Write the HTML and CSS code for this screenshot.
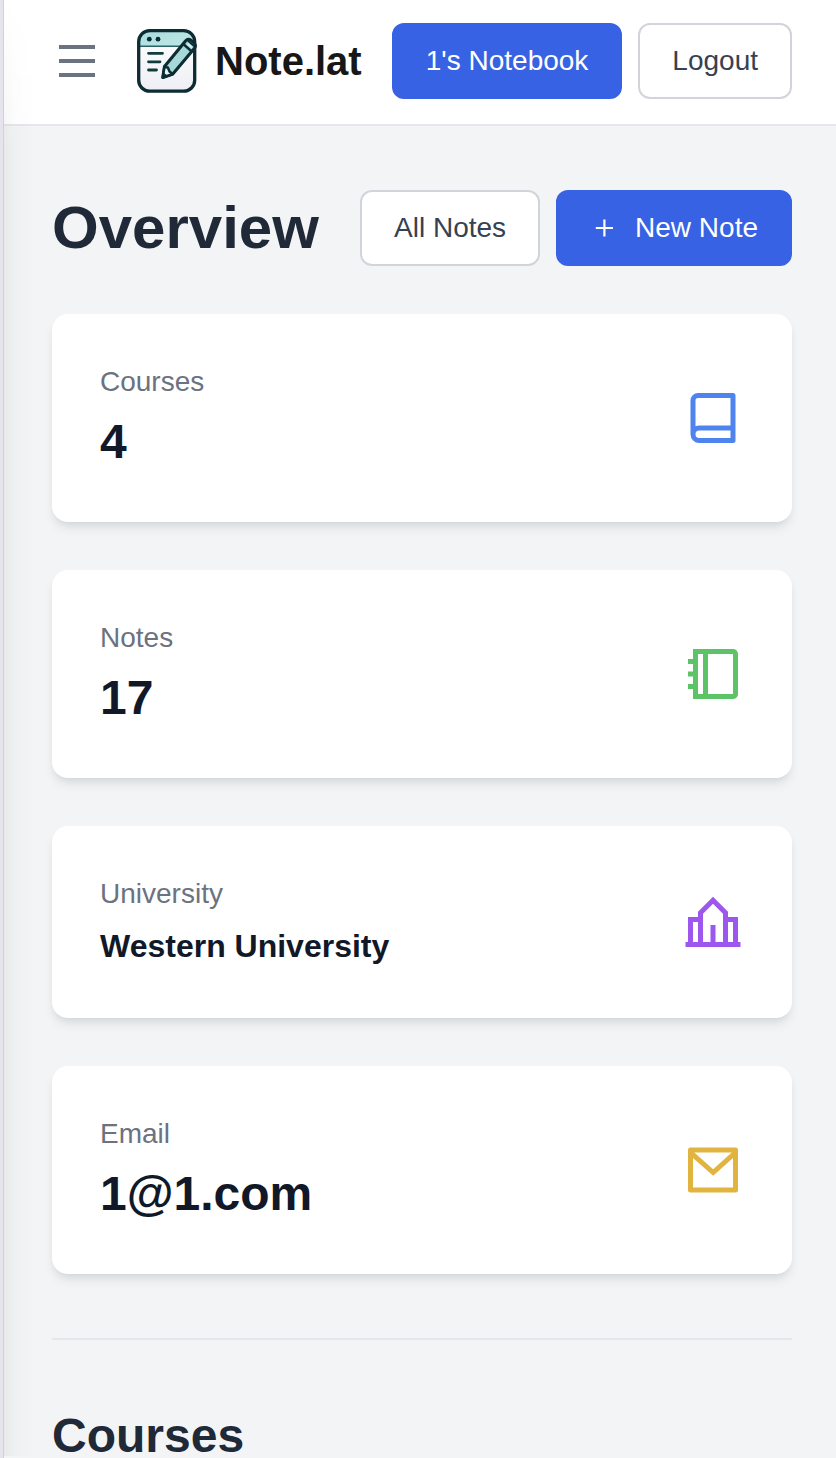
FILE: index.html
```html
<!DOCTYPE html>
<html lang="en">
<head>
<meta charset="utf-8">
<title>Note.lat</title>
<link rel="stylesheet" href="styles.css">
</head>
<body>
<div class="app">
  <div class="edge"></div>
  <div class="page">
    <header class="topbar">
      <button class="menu" aria-label="Menu"><span></span><span></span><span></span></button>
      <svg class="logo" width="64" height="68" viewBox="0 0 64 68">
        <defs>
          <linearGradient id="head" x1="0" y1="0" x2="1" y2="1"><stop offset="0" stop-color="#a6dcdd"/><stop offset="1" stop-color="#c2e8e7"/></linearGradient>
          <linearGradient id="sheet" x1="0" y1="0" x2="0" y2="1"><stop offset="0" stop-color="#fff"/><stop offset="1" stop-color="#eeeff5"/></linearGradient>
        </defs>
        <rect x="3.7" y="3.7" width="56" height="60.5" rx="11" fill="url(#sheet)"/>
        <path d="M3.7 19.5V14.7a11 11 0 0 1 11-11h34a11 11 0 0 1 11 11v4.800z" fill="url(#head)"/>
        <path d="M4 19.300h42" stroke="#2b6265" stroke-width="1.6"/>
        <rect x="3.7" y="3.7" width="56" height="60.5" rx="11" fill="none" stroke="#0d2b33" stroke-width="3.3"/>
        <circle cx="14.3" cy="12.2" r="2.4" fill="#0d2b33"/><circle cx="23" cy="12.2" r="2.4" fill="#0d2b33"/>
        <path d="M13.500 26.300h14M13.500 34.800h11.500M13.500 43h8" stroke="#123c3c" stroke-width="2.8" stroke-linecap="round"/>
        <g stroke="#0d2b33" stroke-width="3.100" stroke-linejoin="round">
          <path d="M27.8 50.5L29.500 39.5 50.500 14Q53 11 56 13.300L59 16Q61.500 18.500 59.500 21.200L37.800 47z" fill="#a7d8d8"/>
          <path d="M27.8 50.5L29.500 39.5 33 40.700 34.500 44.500 37.800 47z" fill="#e7f3f3" stroke-width="2.500"/>
          <path d="M48.800 17.500l7.400 6.500" fill="none" stroke-width="2.400"/>
          <path d="M52.600 16.800l4.300 3.800" fill="none" stroke="#d9efef" stroke-width="2"/>
          <path d="M53 13.800l6 5.400" fill="none" stroke-width="1.800"/>
        </g>
        <path d="M27.300 51.300l.8-6.300 5 4.200z" fill="#0d2b33"/>
      </svg>
      <span class="brand">Note.lat</span>
      <div class="actions">
        <button class="btn primary">1's Notebook</button>
        <button class="btn">Logout</button>
      </div>
    </header>
    <main class="content">
      <div class="heading">
        <h1>Overview</h1>
        <div class="actions">
          <button class="btn">All Notes</button>
          <button class="btn primary"><svg class="plus" width="28" height="28" viewBox="0 0 28 28"><path d="M5.800 14h17.200M14.400 5.400v17.200" stroke="currentColor" stroke-width="2.200"/></svg>New Note</button>
        </div>
      </div>
      <section class="cards">
        <article class="card">
          <div><p class="label">Courses</p><p class="value">4</p></div>
          <svg class="icon blue" viewBox="0 0 24 24"><path d="M3 18.500V5a3 3 0 0 1 3-3h14a1 1 0 0 1 1 1v18a1 1 0 0 1-1 1H6.500A3.500 3.500 0 0 1 3 18.500zM19 20v-3H6.500a1.500 1.500 0 0 0 0 3H19zM5 15.337A3.486 3.486 0 0 1 6.500 15H19V4H6a1 1 0 0 0-1 1v10.337z"/></svg>
        </article>
        <article class="card">
          <div><p class="label">Notes</p><p class="value">17</p></div>
          <svg class="icon green" viewBox="0 0 24 24"><path d="M20.005 2C21.107 2 22 2.898 22 3.990v16.020c0 1.099-.893 1.990-1.995 1.990H4v-4H2v-2h2v-3H2v-2h2V8H2V6h2V2h16.005zM8 4H6v16h2V4zm12 0H10v16h10V4z"/></svg>
        </article>
        <article class="card">
          <div><p class="label">University</p><p class="value small">Western University</p></div>
          <svg class="icon purple" viewBox="0 0 24 24"><path d="M1 21h22M3 20v-9h4M21 20v-9h-4M7 20V8.300l5-5 5 5V20M12 20v-6.800"/></svg>
        </article>
        <article class="card">
          <div><p class="label">Email</p><p class="value">1@1.com</p></div>
          <svg class="icon yellow" viewBox="0 0 24 24"><path d="M3 3h18a1 1 0 0 1 1 1v16a1 1 0 0 1-1 1H3a1 1 0 0 1-1-1V4a1 1 0 0 1 1-1zm17 4.238l-7.928 7.100L4 7.216V19h16V7.238zM4.511 5l7.550 6.662L19.502 5H4.511z"/></svg>
        </article>
      </section>
      <hr>
      <h2>Courses</h2>
    </main>
    <div class="edge-shadow"></div>
  </div>
</div>
</body>
</html>
```
FILE: styles.css
```css
* { box-sizing: border-box; }
body { margin: 0; font-family: "Liberation Sans", Arial, sans-serif; background: #f3f4f6; }
h1, h2, p { margin: 0; }
.app { display: flex; height: 1458px; overflow: hidden; }
.edge { width: 4px; flex: none; background: #e7e3ec; border-right: 1px solid #d3d1d7; }
.page { position: relative; flex: 1; background: #f3f4f6; }
.edge-shadow { position: absolute; inset: 0 auto 2px 0; width: 30px; background: linear-gradient(to right, rgba(0,0,0,.045), rgba(0,0,0,.015) 35%, transparent); mask-image: linear-gradient(to bottom, transparent, #000 150px); }
.topbar { display: flex; align-items: center; height: 126px; padding: 0 44px 2px 55px; background: #fff; border-bottom: 2px solid #e5e7eb; }
.menu { display: flex; flex-direction: column; gap: 10px; width: 36px; padding: 0; border: 0; background: none; }
.menu span { height: 4px; background: #6b7280; }
.logo { flex: none; margin-left: 40px; }
.brand { margin-left: 16px; font-size: 40px; font-weight: 700; line-height: 56px; color: #171717; }
.actions { display: flex; gap: 16px; margin-left: auto; }
.btn { display: flex; align-items: center; height: 76px; padding: 0 32px; border: 2px solid #d1d5db; border-radius: 12px; background: #fff; color: #374151; font: 28px/40px "Liberation Sans", Arial, sans-serif; white-space: nowrap; }
.btn.primary { background: #3862e4; border-color: #3862e4; color: #fff; }
.plus { margin-right: 17px; }
.content { padding: 64px 44px 0 48px; }
.heading { display: flex; align-items: center; height: 76px; margin-bottom: 48px; }
h1 { font-size: 60px; line-height: 72px; color: #1f2937; }
.cards { display: grid; gap: 48px; }
.card { display: flex; align-items: center; justify-content: space-between; padding: 48px; border-radius: 16px; background: #fff; box-shadow: 0 8px 12px -2px rgba(0,0,0,.08), 0 4px 8px -4px rgba(0,0,0,.1); }
.label { font-size: 28px; line-height: 40px; color: #6b7280; }
.value { margin-top: 8px; font-size: 48px; font-weight: 700; line-height: 64px; color: #111827; }
.value.small { font-size: 32px; line-height: 48px; }
.icon { width: 60px; height: 60px; margin-right: 1px; fill: currentColor; }
.blue { color: #4f84ef; }
.green { color: #5dc367; }
.purple { color: #9d57ef; fill: none; stroke: currentColor; stroke-width: 2; }
.yellow { color: #e0b43e; }
hr { height: 2px; margin: 64px 0; border: 0; background: #e5e7eb; }
h2 { font-size: 48px; line-height: 64px; color: #1f2937; }
```
